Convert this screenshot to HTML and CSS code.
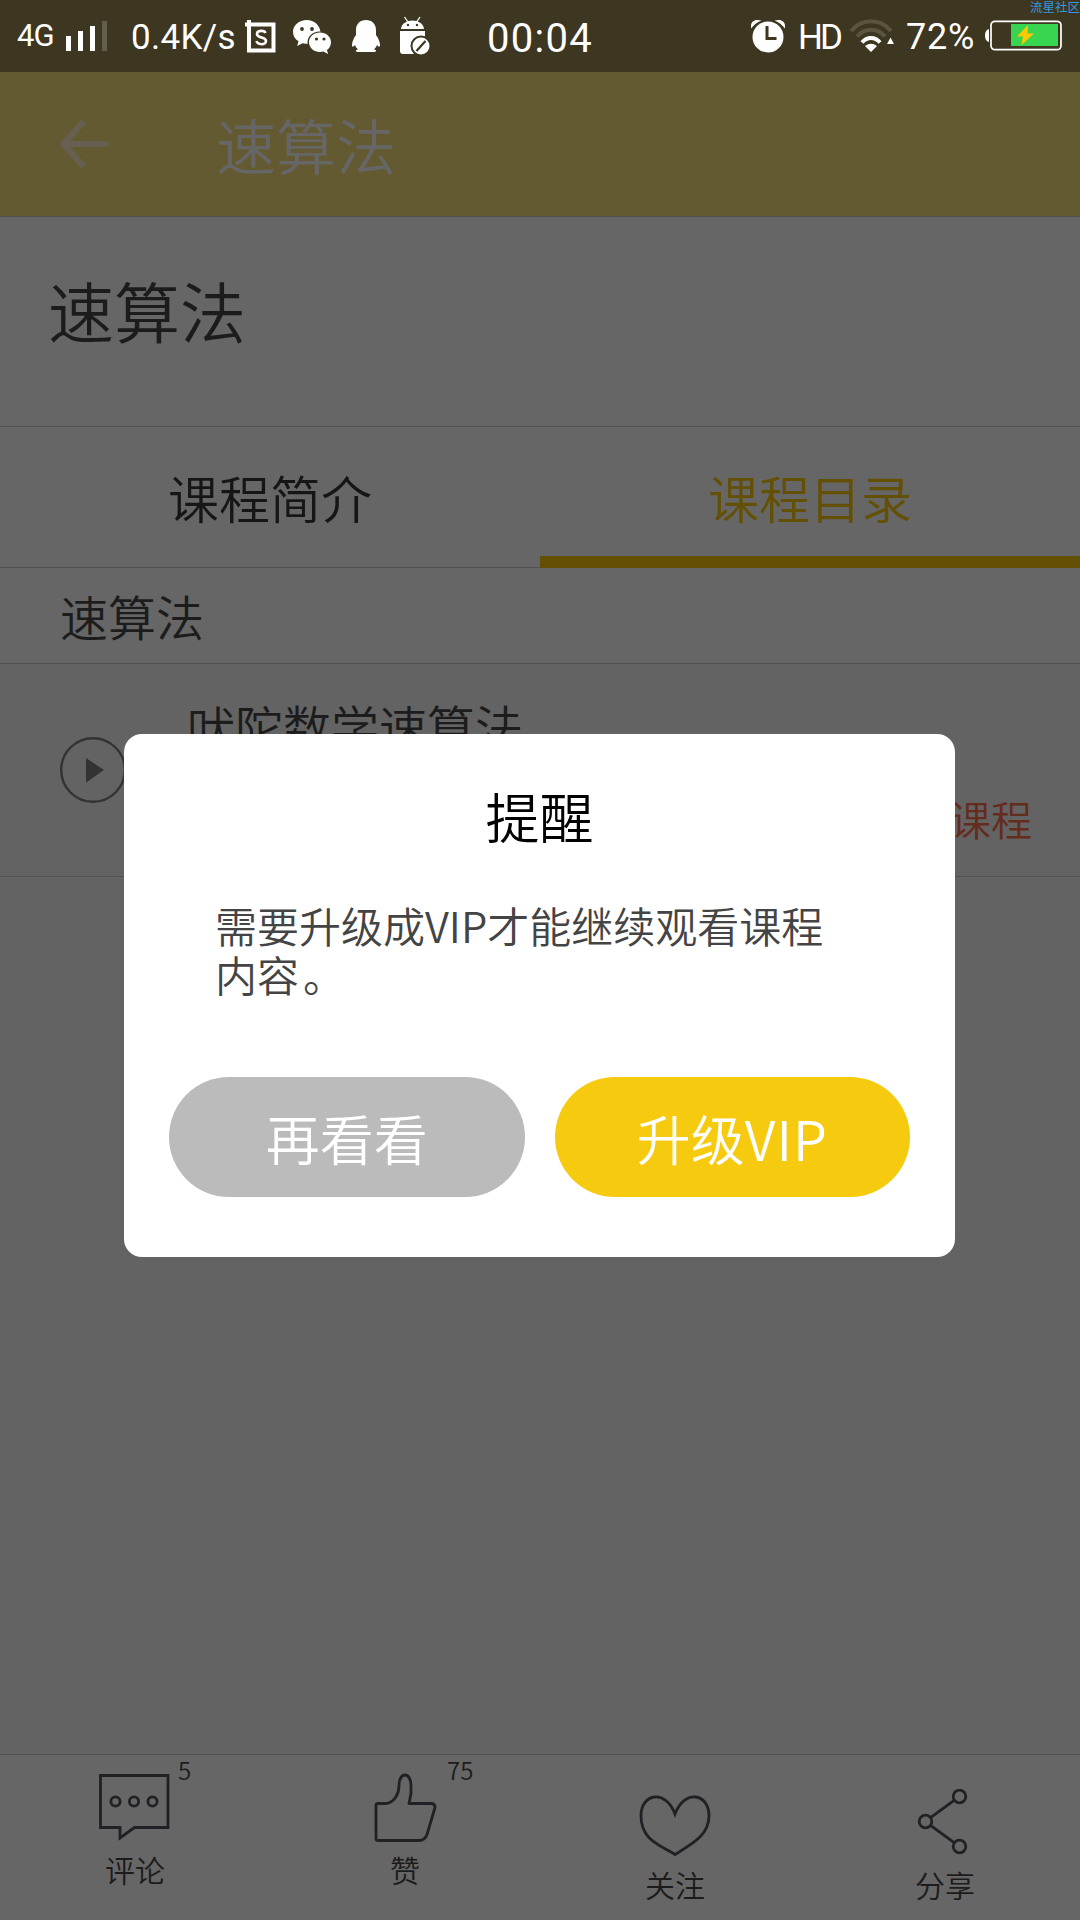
FILE: index.html
```html
<!DOCTYPE html>
<html lang="zh-CN">
<head>
<meta charset="utf-8">
<title>速算法</title>
<link rel="stylesheet" href="styles.css">
</head>
<body>
<div class="screen">
  <header class="status">
    <span class="status-net">4G</span>
    <svg class="status-signal" viewBox="0 0 42 32" width="42" height="32"><path fill="#fff" d="M0 15h5v15H0zM12 10h5v20h-5zM24 5h5v25h-5z"/><path fill="#635d4c" d="M36 0h5v30h-5z"/></svg>
    <span class="status-speed">0.4K/s</span>
    <svg class="status-s" viewBox="0 0 32 34" width="32" height="34"><path fill="none" stroke="#fff" stroke-width="4" d="M4 0v30.500h24.500V4.500H0"/><path fill="none" stroke="#fff" stroke-width="2.600" d="M20.500 13c-1-3-8.500-3-8.500 1 0 4.500 9 2.500 9 7 0 4.500-8.500 4-9.500 0"/></svg>
    <svg class="status-wechat" viewBox="0 0 40 36" width="40" height="36"><path fill="#fff" d="M14 1C6 1 0 6.200 0 13c0 4 2 7 5.500 9.300L4.200 27l5.300-2.700 5 .7C14 17 20 12 27.500 12.500 26.500 6 21 1 14 1z"/><path fill="#fff" d="M27 13.500c-6 0-11 4.200-11 9.700s5 9.800 11 9.800l3.500-.5 4.500 2.500-1-4c2.500-1.800 4-4.500 4-7.800 0-5.500-5-9.700-11-9.700z"/><g fill="#3d3620"><circle cx="9" cy="10" r="1.900"/><circle cx="19" cy="10" r="1.900"/><circle cx="23.500" cy="20" r="1.600"/><circle cx="31" cy="20" r="1.600"/></g></svg>
    <svg class="status-qq" viewBox="0 0 28 34" width="28" height="34"><path fill="#fff" d="M14 1C8 1 4 5 4 11v5c-2.500 3.500-4 7-4 10 0 2 1 2.500 3 0 .7 2.200 1.800 3.300 3 4.500-3 .5-3 2.500 1 2.500h14c4 0 4-2 1-2.500 1.200-1.200 2.300-2.300 3-4.500 2 2.500 3 2 3 0 0-3-1.500-6.500-4-10v-5c0-6-4-10-10-10z"/></svg>
    <svg class="status-droid" viewBox="0 0 30 40" width="30" height="40"><path fill="none" stroke="#fff" stroke-width="1.300" d="M4.500 1l3.500 5M20 1l-3.500 5"/><path fill="#fff" d="M1 13C2 1.500 23 1.500 24 13zM0 15h25v19q0 4-4 4H3q-3 0-3-3z"/><circle cx="8" cy="9" r="1.200" fill="#3d3620"/><circle cx="17" cy="9" r="1.200" fill="#3d3620"/><circle cx="21" cy="30" r="9.500" fill="#fff" stroke="#3d3620" stroke-width="2"/><path stroke="#3d3620" stroke-width="2.200" d="M16.500 35l9-10"/></svg>
    <span class="status-time">00:04</span>
    <svg class="status-alarm" viewBox="0 0 34 34" width="34" height="34"><circle cx="17" cy="18" r="15.500" fill="#fff"/><path fill="#fff" d="M0 9.500C-1 1 5 0 10.500 1.500 6 3 3 6 0 9.500zM34 9.500C35 1 29 0 23.500 1.500 28 3 31 6 34 9.500z"/><path fill="none" stroke="#3d3620" stroke-width="3" d="M16 7v12.500h9.500"/></svg>
    <span class="status-hd">HD</span>
    <svg class="status-wifi" viewBox="0 0 46 34" width="46" height="34"><g fill="none" stroke-width="4"><path stroke="#5b543f" d="M2 12C13-1 31-1 42 12M8 17.500c8-9 20-9 28 0"/><path stroke="#fff" d="M13 23.500c5-6 13-6 18 0"/></g><path fill="#fff" d="M16 27q6-4.500 12 0l-6 6zM38 25l3.500-6.500L45 25z"/></svg>
    <span class="status-pct">72%</span>
    <svg class="status-battery" viewBox="0 0 78 32" width="78" height="32"><path fill="#fff" d="M4 9v13q-4-1-4-6.500T4 9z"/><rect x="6" y="1.300" width="70" height="28.400" rx="4" fill="none" stroke="#fff" stroke-width="1.700"/><path fill="#38d551" d="M26 4h47v22H26z"/><path fill="#ffc800" d="M43 5L32 16.500h6L36.500 25 49 13.500h-6.500z"/></svg>
    <span class="watermark">流星社区</span>
  </header>

  <nav class="appbar">
    <svg class="back" viewBox="0 0 50 50" width="50" height="50"><path fill="none" stroke="#676050" stroke-width="6" d="M24 2.500L3 25l21 22.500M3 25h45"/></svg>
    <span class="appbar-title">速算法</span>
  </nav>

  <h1 class="course-title">速算法</h1>

  <div class="tabs">
    <div class="tab">课程简介</div>
    <div class="tab tab-active">课程目录</div>
  </div>

  <h2 class="section">速算法</h2>

  <main class="content">
    <div class="lesson">
      <svg class="play" viewBox="0 0 66 66" width="66" height="66"><circle cx="33" cy="33" r="31.800" fill="none" stroke="#333" stroke-width="2.400"/><path fill="#333" d="M26 21v24.500L44 33z"/></svg>
      <div class="lesson-info">
        <div class="lesson-name">吠陀数学速算法</div>
        <div class="lesson-tag">课程</div>
      </div>
    </div>
  </main>

  <footer class="actions">
    <div class="action">
      <svg viewBox="0 0 74 70" width="74" height="70"><g fill="none" stroke="#202125" stroke-width="2.800"><path d="M2.500 3.500h67.500v52H36.500L22 66V55.500H2.500z"/><circle cx="17.500" cy="29.500" r="4.600"/><circle cx="36" cy="29.500" r="4.600"/><circle cx="54.500" cy="29.500" r="4.600"/></g></svg>
      <span>评论</span><b class="badge badge-comment">5</b>
    </div>
    <div class="action">
      <svg viewBox="0 0 74 70" width="74" height="70"><path fill="none" stroke="#202125" stroke-width="2.800" stroke-linejoin="round" d="M10 31.500h9c8-2 12-10 12-18 0-14 12-14 12 0v8l-2 10h22q4 0 4 4l-8 27q-2 6-8 6H10q-2 0-2-2v-33q0-2 2-2z"/></svg>
      <span>赞</span><b class="badge badge-like">75</b>
    </div>
    <div class="action action-low">
      <svg viewBox="0 0 74 70" width="74" height="70"><path fill="none" stroke="#202125" stroke-width="2.800" d="M37 25C28 0 3 4 3 27c0 24 19 29 34 38.500C52 56 71 47 71 27 71 4 46 0 37 25z"/></svg>
      <span>关注</span>
    </div>
    <div class="action action-low">
      <svg viewBox="0 0 74 70" width="74" height="70"><g fill="none" stroke="#202125" stroke-width="2.800"><circle cx="51.500" cy="7.500" r="6.300"/><circle cx="17.500" cy="32.500" r="6.300"/><circle cx="51.500" cy="57.500" r="6.300"/><path d="M22.500 28.700l24-17.500M22.500 36.300l24 17.500"/></g></svg>
      <span>分享</span>
    </div>
  </footer>

  <div class="dialog">
    <div class="dialog-title">提醒</div>
    <p class="dialog-text">需要升级成VIP才能继续观看课程内<span class="stop">容</span>。</p>
    <div class="dialog-buttons">
      <button class="btn btn-later">再看看</button>
      <button class="btn btn-vip">升级<span class="latin">VIP</span></button>
    </div>
  </div>
</div>
</body>
</html>
```
FILE: styles.css
```css
* { box-sizing: border-box; }
body { margin: 0; font-family: "Noto Sans CJK SC", sans-serif; font-weight: 350; color: #1c1c1c; }
svg { display: block; flex: none; }
.screen { position: relative; display: flex; flex-direction: column; width: 1080px; height: 1920px; background: #636363; overflow: hidden; }

.status { position: relative; display: flex; align-items: flex-start; height: 72px; background: #3d3620; color: #fff; font-family: Roboto, sans-serif; font-weight: 400; white-space: nowrap; }
.status span { flex: none; }
.status-net { width: 48px; margin-left: 17px; padding-top: 17px; font-size: 31px; line-height: 38px; letter-spacing: -1px; }
.status-signal { margin-top: 21px; margin-left: 1px; }
.status-speed { width: 108px; margin-left: 23px; padding-top: 18px; font-size: 35px; line-height: 40px; letter-spacing: 0.3px; }
.status-s { margin: 20px 0 0 6px; }
.status-wechat { margin: 19px 0 0 16px; }
.status-qq { margin: 19px 0 0 19px; }
.status-droid { margin: 16px 0 0 20px; }
.status-time { width: 108px; margin-left: 57px; padding-top: 16px; font-size: 40px; line-height: 46px; letter-spacing: 1.3px; }
.status-alarm { margin: 19px 0 0 156px; }
.status-hd { width: 46px; margin-left: 13px; padding-top: 17px; font-size: 35px; line-height: 41px; letter-spacing: -3px; }
.status-wifi { margin: 19px 0 0 5px; }
.status-pct { width: 74px; margin-left: 11px; padding-top: 17px; font-size: 36px; line-height: 41px; letter-spacing: 0.8px; }
.status-battery { margin: 20px 0 0 5px; }
.watermark { position: absolute; top: 0; right: 0; color: #3399e0; font: 400 12.500px/13px "Noto Sans CJK SC", sans-serif; }

.appbar { display: flex; align-items: flex-start; height: 145px; padding: 47px 0 0 60px; background: #645a31; border-bottom: 1px solid #525252; }
.appbar-title { margin: -18px 0 0 106px; font-size: 60px; line-height: 86px; color: #666; }

.course-title { height: 209px; margin: 0; padding: 44px 48px 0; background: #666; font-weight: 350; font-size: 66px; line-height: 96px; }

.tabs { display: flex; height: 142px; background: #666; border-top: 1px solid #525252; }
.tab { flex: 1; height: 141px; border-bottom: 1px solid #525252; text-align: center; font-size: 51px; line-height: 74px; padding-top: 33px; color: #161616; }
.tab-active { color: #645004; border-bottom: 12px solid #645004; }

.section { height: 96px; margin: 0; padding: 12px 60px 0; background: #666; border-bottom: 1px solid #525252; font-weight: 350; font-size: 48px; line-height: 70px; }

.content { flex: 1; }
.lesson { display: flex; height: 213px; padding: 0 48px 0 60px; border-bottom: 1px solid #525252; }
.play { margin-top: 73px; }
.lesson-info { display: flex; flex: 1; flex-direction: column; padding: 26px 0 0 61px; }
.lesson-name { font-size: 48px; line-height: 70px; }
.lesson-tag { align-self: flex-end; margin-top: 28px; font-size: 41px; line-height: 60px; color: #642c1c; }

.actions { display: flex; height: 166px; background: #666; border-top: 1px solid #525252; }
.action { position: relative; display: flex; flex: 1; flex-direction: column; align-items: center; padding-top: 17px; }
.action-low { padding-top: 34px; }
.action span { margin-top: 5px; font-size: 30px; line-height: 44px; }
.action-low span { margin-top: 3px; }
.badge { position: absolute; top: -1px; font-size: 24px; line-height: 32px; font-weight: 350; }
.badge-comment { left: 178px; }
.badge-like { left: 177px; }

.dialog { position: absolute; left: 124px; top: 734px; width: 831px; height: 523px; padding: 43px 45px 60px; border-radius: 18px; background: #fff; }
.dialog-title { text-align: center; font-size: 54px; line-height: 78px; color: #000; }
.dialog-text { width: 620px; height: 98px; margin: 45px 0 0 46px; font-size: 42px; line-height: 49px; color: #444; }
.latin { letter-spacing: 1px; }
.stop { letter-spacing: 4px; }
.dialog-buttons { display: flex; gap: 30px; margin-top: 79px; }
.btn { flex: 1; height: 120px; padding: 2px 0 0; border: 0; border-radius: 60px; font: 350 54px/118px "Noto Sans CJK SC", sans-serif; color: #fff; }
.btn-later { background: #bbb; }
.btn-vip { background: #f6cb0f; }
```
